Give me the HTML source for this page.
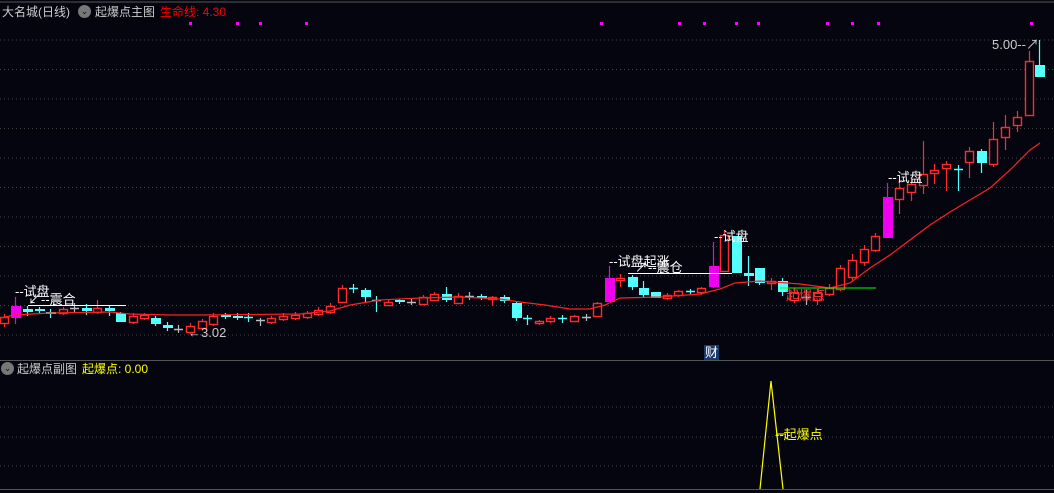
<!DOCTYPE html>
<html><head><meta charset="utf-8"><style>
html,body{margin:0;padding:0;background:#05050f;width:1054px;height:493px;overflow:hidden;font-family:"Liberation Sans","Noto Sans CJK SC",sans-serif}
.t{position:absolute;font-size:13px;white-space:nowrap;line-height:15px}
.h{font-size:12px}
</style></head><body>
<svg width="1054" height="493" style="position:absolute;left:0;top:0" id="s">
<line x1="0" y1="2" x2="1054" y2="2" stroke="#555" stroke-width="1"/>
<line x1="0" y1="360.5" x2="1054" y2="360.5" stroke="#555" stroke-width="1"/>
<line x1="0" y1="489.5" x2="1054" y2="489.5" stroke="#555" stroke-width="1"/>
<g id="grid" stroke="#444" stroke-dasharray="1,3"></g>
<g id="c"></g>
<polyline fill="none" stroke="#ff2020" stroke-width="1.2" points="0,318 15,315 50,313 110,312 130,314 170,315 200,315 300,314 330,311 350,305 380,300 420,298 460,297 500,299 520,302 545,305 570,309 590,309 605,305 620,298 660,297 700,294 720,289 735,283 760,281 800,284 830,288 850,283 870,268 890,255 910,240 930,225 950,212 970,200 990,188 1010,170 1030,150 1040,143"/>
<line x1="780" y1="288" x2="876" y2="288" stroke="#00ff00" stroke-width="1"/>
<line x1="28" y1="305.5" x2="126" y2="305.5" stroke="#fff"/>
<line x1="628" y1="273.5" x2="732" y2="273.5" stroke="#fff"/>
<polyline fill="none" stroke="#ffff00" stroke-width="1.2" points="760,489 771,381 783,489"/>
<line x1="776" y1="434" x2="786" y2="434" stroke="#ff0" />
<rect x="704" y="345" width="15" height="15" fill="#1a3a6a"/>
</svg>
<div class="t h" style="left:2px;top:5px;color:#ccc">大名城(日线)</div>
<div style="position:absolute;left:78px;top:5px;width:13px;height:13px;border-radius:7px;background:#777;color:#111;font-size:9px;text-align:center;line-height:12px">⌄</div>
<div class="t h" style="left:95px;top:5px;color:#ccc">起爆点主图</div>
<div class="t h" style="left:160px;top:5px;color:#f00">生命线: 4.30</div>
<div style="position:absolute;left:1px;top:362px;width:13px;height:13px;border-radius:7px;background:#777;color:#111;font-size:9px;text-align:center;line-height:12px">⌄</div>
<div class="t h" style="left:17px;top:362px;color:#ccc">起爆点副图</div>
<div class="t h" style="left:82px;top:362px;color:#ff0">起爆点: 0.00</div>
<div class="t" style="left:705px;top:345px;color:#fff">财</div>
<div class="t" style="left:775px;top:427px;color:#ff0">--起爆点</div>
<div class="t" style="left:15px;top:284px;color:#fff">--试盘</div>
<div class="t" style="left:28px;top:292px;color:#fff">↙--震合</div>
<div class="t" style="left:188px;top:325px;color:#ccc">←3.02</div>
<div class="t" style="left:609px;top:254px;color:#fff">--试盘起涨</div>
<div class="t" style="left:635px;top:260px;color:#fff">↗--震仓</div>
<div class="t" style="left:714px;top:229px;color:#fff">--试盘</div>
<div class="t" style="left:888px;top:170px;color:#fff">--试盘</div>
<div class="t" style="left:786px;top:288px;color:#f33">起爆点</div>
<div class="t" style="left:992px;top:37px;color:#ccc">5.00--↗</div>
<script>
var g=document.getElementById('grid'),h='';
[40,69.5,99,128.5,158,187.5,217,246.5,276,305.5,335].forEach(function(y){h+='<line x1="0" y1="'+y+'" x2="1054" y2="'+y+'"/>'});
[407,437,466].forEach(function(y){h+='<line x1="0" y1="'+y+'" x2="1054" y2="'+y+'"/>'});
g.innerHTML=h;
var d=[[4,'r',317,323,314,327],[15,'m',306,318,297,324],[27,'c',309,312,306,316],[39,'c',309,311,307,314],[50,'c',312,314,309,318],[63,'r',309,313,307,315],[74,'x',308,308,303,313],[86,'c',308,311,304,315],[97,'r',308,312,300,314],[109,'c',308,311,306,316],[120,'c',313,322,312,322],[133,'r',316,322,313,324],[144,'r',315,318,313,320],[155,'c',318,324,316,326],[167,'c',325,328,322,331],[178,'x',329,329,325,333],[190,'r',326,332,323,334],[202,'r',321,328,319,330],[213,'r',316,324,313,326],[225,'c',315,317,313,319],[237,'c',316,318,313,320],[248,'q',317,319,313,322],[260,'x',320,320,318,326],[271,'r',318,322,316,324],[283,'r',316,319,313,321],[295,'r',315,318,312,320],[307,'r',313,317,311,319],[318,'r',310,314,307,316],[330,'r',306,312,303,314],[342,'r',288,302,285,303],[353,'q',288,291,284,293],[365,'c',290,297,288,302],[376,'q',300,300,296,312],[388,'r',302,305,300,306],[399,'c',300,302,299,304],[411,'x',302,302,298,305],[423,'r',297,304,295,305],[434,'r',294,300,292,301],[446,'c',294,300,287,302],[458,'r',296,303,293,304],[469,'x',296,296,292,300],[481,'c',296,298,294,300],[492,'r',297,299,296,306],[504,'c',297,301,295,303],[516,'c',303,318,302,321],[527,'q',318,318,315,325],[539,'r',321,323,320,325],[550,'r',318,321,316,323],[562,'q',318,318,315,323],[574,'r',316,321,315,322],[586,'x',317,317,314,321],[597,'r',303,316,302,317],[609,'m',278,302,266,302],[620,'r',278,280,274,287],[632,'c',277,287,275,290],[643,'c',288,295,281,297],[655,'c',292,298,292,298],[667,'r',295,298,293,300],[678,'r',291,295,290,297],[690,'q',291,291,289,294],[701,'r',288,292,287,295],[713,'m',266,287,242,288],[724,'r',235,271,230,272],[736,'c',236,273,236,273],[748,'c',273,276,256,286],[759,'c',268,283,268,285],[771,'r',281,283,278,290],[782,'c',281,292,278,296],[794,'r',292,300,288,303],[806,'x',297,297,290,305],[817,'r',292,300,289,305],[829,'r',288,294,284,296],[840,'r',268,289,265,291],[852,'r',260,277,254,281],[864,'r',249,262,245,266],[875,'r',236,250,233,252],[887,'m',197,238,183,238],[899,'r',188,199,178,214],[911,'r',184,192,178,201],[923,'r',174,185,141,194],[934,'r',170,173,164,184],[946,'r',164,168,161,191],[958,'q',169,169,165,191],[969,'r',151,162,147,178],[981,'c',151,163,149,173],[993,'r',139,164,122,167],[1005,'r',127,137,115,150],[1017,'r',117,125,111,132],[1029,'r',61,115,51,116],[1039,'c',65,77,40,77]];
var o='';
d.forEach(function(a){var x=a[0],t=a[1],col=t=='r'?'#ff2a2a':t=='c'||t=='q'?'#54ffff':t=='m'?'#ee00ee':'#bbb';
o+='<line x1="'+(x+.5)+'" y1="'+a[4]+'" x2="'+(x+.5)+'" y2="'+a[5]+'" stroke="'+col+'" stroke-width="1.2"/>';
var hgt=Math.max(a[3]-a[2],1);
if(t=='r')o+='<rect x="'+(x-3.5)+'" y="'+(a[2]+.5)+'" width="8" height="'+hgt+'" fill="#05050f" stroke="'+col+'" stroke-width="1.4"/>';
else if(t=='x'||t=='q')o+='<line x1="'+(x-4)+'" y1="'+(a[2]+.5)+'" x2="'+(x+5)+'" y2="'+(a[2]+.5)+'" stroke="'+col+'" stroke-width="1.5"/>';
else o+='<rect x="'+(x-4)+'" y="'+a[2]+'" width="10" height="'+hgt+'" fill="'+col+'"/>';});
[189,236,259,305,600,678,703,735,757,826,851,877,1030].forEach(function(x){o+='<rect x="'+x+'" y="22" width="3" height="3" fill="#ff00ff"/>'});
document.getElementById('c').innerHTML=o;
</script>
</body></html>
